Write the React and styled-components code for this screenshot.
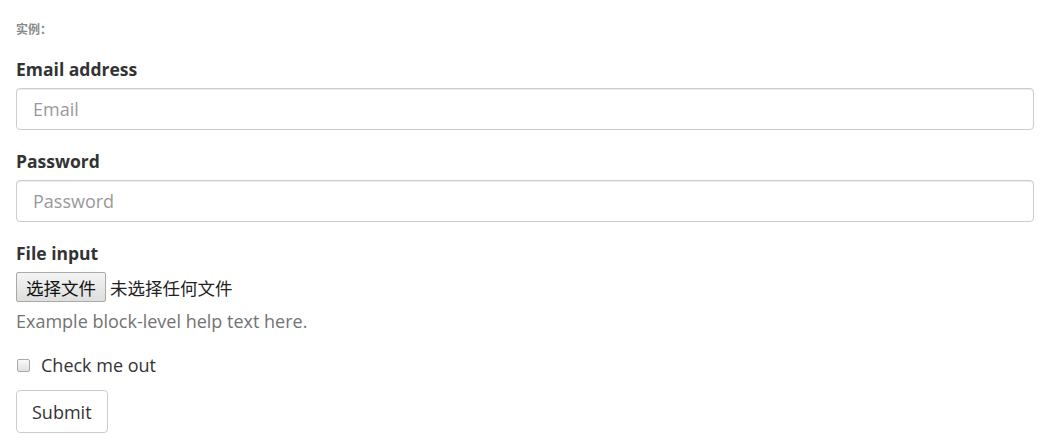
import React from "react";
import styled, { createGlobalStyle } from "styled-components";

const GlobalStyle = createGlobalStyle`
  * { box-sizing: border-box; }
  body {
    margin: 0;
    background: #fff;
    font-family: "Open Sans", "Noto Sans", "Noto Sans CJK SC", sans-serif;
    color: #333;
  }
`;

const Page = styled.div`
  padding: 19px 9px 0 16px;
`;

const Caption = styled.div`
  font-size: 12px;
  font-weight: bold;
  color: #888;
  font-family: "Noto Sans CJK SC", sans-serif;
  line-height: 20px;
  margin-bottom: 18px;
`;

const Group = styled.div`
  margin-bottom: ${(p) => p.$gap || 19}px;
`;

const Label = styled.label`
  display: block;
  font-size: 17.5px;
  font-weight: 700;
  line-height: 24px;
  margin-bottom: 7px;
  color: #333;
`;

const Input = styled.input`
  display: block;
  width: 100%;
  height: 42px;
  padding: 0 16px;
  font-family: inherit;
  font-size: 18px;
  color: #555;
  border: 1px solid #ccc;
  border-radius: 4px;
  box-shadow: inset 0 1px 1px rgba(0, 0, 0, 0.075);
  outline: none;
  &::placeholder { color: #999; }
`;

const FileRow = styled.div`
  display: flex;
  align-items: center;
  gap: 4px;
  font-family: "Noto Sans CJK SC", sans-serif;
  font-size: 17.5px;
  color: #222;
`;

const FileButton = styled.button`
  height: 30px;
  padding: 0 9px;
  font-family: "Noto Sans CJK SC", sans-serif;
  font-size: 17.5px;
  color: #111;
  background: linear-gradient(#f4f4f4, #dedede);
  border: 1px solid #a9a9a9;
  border-radius: 2px;
`;

const Help = styled.p`
  margin: 7px 0 0;
  font-size: 18px;
  line-height: 24px;
  color: #737373;
`;

const CheckRow = styled.label`
  display: flex;
  align-items: center;
  gap: 11px;
  font-size: 18px;
  line-height: 24px;
  margin-bottom: 13px;
`;

const Box = styled.span`
  width: 13px;
  height: 13px;
  margin-left: 1px;
  border: 1px solid #aaa;
  border-radius: 2px;
  background: linear-gradient(#fafafa, #e0e0e0);
`;

const Submit = styled.button`
  height: 43px;
  padding: 0 15px;
  font-family: inherit;
  font-size: 18px;
  color: #333;
  background: #fff;
  border: 1px solid #ccc;
  border-radius: 4px;
`;

export default function App() {
  return (
    <>
      <GlobalStyle />
      <Page>
        <Caption>实例：</Caption>
        <Group>
          <Label>Email address</Label>
          <Input type="email" placeholder="Email" />
        </Group>
        <Group>
          <Label>Password</Label>
          <Input type="password" placeholder="Password" />
        </Group>
        <Group $gap={20}>
          <Label>File input</Label>
          <FileRow>
            <FileButton>选择文件</FileButton>
            <span>未选择任何文件</span>
          </FileRow>
          <Help>Example block-level help text here.</Help>
        </Group>
        <CheckRow>
          <Box />
          Check me out
        </CheckRow>
        <Submit>Submit</Submit>
      </Page>
    </>
  );
}
